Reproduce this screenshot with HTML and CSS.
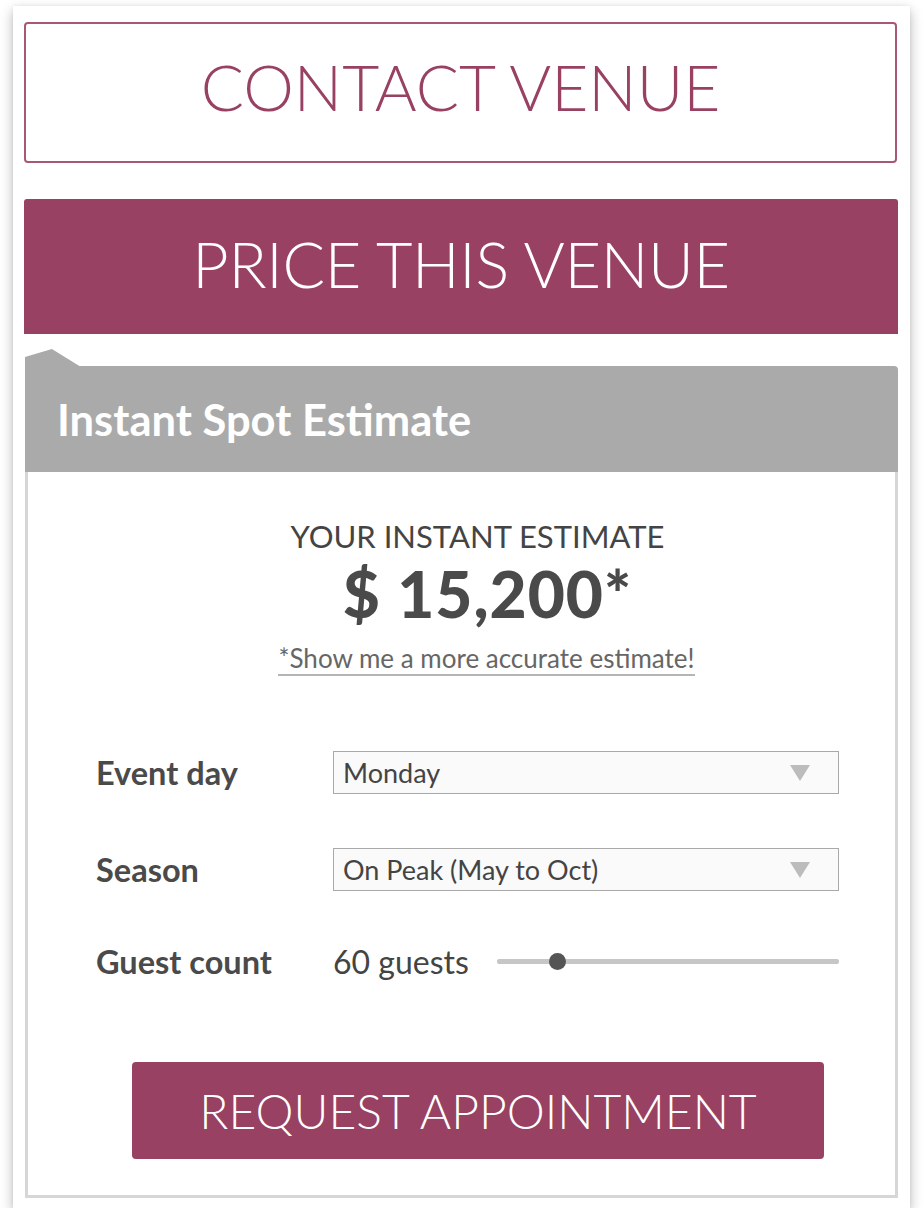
FILE: index.html
```html
<!DOCTYPE html>
<html>
<head>
<meta charset="utf-8">
<link rel="stylesheet" href="styles.css">
</head>
<body>
<div class="card">
  <div class="btn-outline">CONTACT VENUE</div>
  <div class="btn-price">PRICE THIS VENUE</div>
  <div class="panel">
    <div class="panel-head">Instant Spot Estimate</div>
    <div class="panel-body">
      <div class="estimate">
        <div class="est-title">YOUR INSTANT ESTIMATE</div>
        <div class="est-price">$ 15,200*</div>
        <div class="est-link-wrap"><span class="est-link">*Show me a more accurate estimate!</span></div>
      </div>
      <div class="form">
        <div class="row">
          <div class="label">Event day</div>
          <div class="select"><span>Monday</span><span class="caret"></span></div>
        </div>
        <div class="row">
          <div class="label">Season</div>
          <div class="select"><span>On Peak (May to Oct)</span><span class="caret"></span></div>
        </div>
        <div class="row row-guest">
          <div class="label">Guest count</div>
          <div class="guest">
            <span class="guest-val">60 guests</span>
            <div class="slider"><div class="track"></div><div class="thumb"></div></div>
          </div>
        </div>
      </div>
      <div class="btn-request">REQUEST APPOINTMENT</div>
    </div>
  </div>
</div>
</body>
</html>
```
FILE: styles.css
```css
* { box-sizing: border-box; }
html, body { margin: 0; padding: 0; background: #fff; }
body { font-family: Lato, "Open Sans", sans-serif; color: #4a4a4a; }

.card {
  margin: 6px 14px 0 13px;
  width: 897px;
  padding: 16px 12px 10px 11px;
  background: #fff;
  box-shadow: 0 5px 12px rgba(0,0,0,0.28), 0 0 4px rgba(0,0,0,0.06);
}

.btn-outline {
  width: 873px;
  height: 141px;
  border: 2px solid #a85877;
  border-radius: 4px;
  color: #984162;
  font-size: 64px;
  font-weight: 300;
  display: flex;
  align-items: center;
  justify-content: center;
  padding-bottom: 12px;
}

.btn-price {
  margin-top: 36px;
  width: 874px;
  height: 135px;
  background: #984162;
  border-radius: 3px 3px 0 0;
  color: #fff;
  font-size: 63px;
  font-weight: 300;
  letter-spacing: -0.3px;
  display: flex;
  align-items: center;
  justify-content: center;
  padding-bottom: 6px;
}

.panel {
  margin: 32px 0 0 1px;
  width: 873px;
  position: relative;
}
.panel::before {
  content: "";
  position: absolute;
  left: 0;
  top: -17px;
  width: 56px;
  height: 18px;
  background: #aaaaaa;
  clip-path: polygon(0 45%, 48% 0, 100% 100%, 0 100%);
}
.panel-head {
  height: 106px;
  background: #aaaaaa;
  border-radius: 0 4px 0 0;
  color: #fff;
  font-size: 43.5px;
  font-weight: 700;
  display: flex;
  align-items: center;
  padding-left: 32px;
}
.panel-body {
  border: 3px solid #d6d6d6;
  border-top: none;
  padding: 46px 56px 36px 68px;
}

.estimate { text-align: center; padding-left: 20px; }
.est-title { font-size: 31px; line-height: 36px; color: #444; }
.est-price { margin: 8px 0 0 20px; font-size: 64px; line-height: 63px; font-weight: 900; letter-spacing: 1px; color: #4a4a4a; }
.est-link-wrap { margin: 18px 0 0 18px; }
.est-link {
  display: inline-block;
  font-size: 26px;
  line-height: 30px;
  color: #666;
  padding-bottom: 1px;
  border-bottom: 2px solid #b5b5b5;
}

.form { margin-top: 75px; display: flex; flex-direction: column; gap: 54px; }
.row { display: flex; align-items: center; }
.row-guest { margin-top: -3px; }
.label { width: 237px; font-size: 32.5px; font-weight: 700; color: #4a4a4a; }
.select {
  width: 506px;
  height: 43px;
  border: 1.5px solid #a9a9a9;
  background: #fafafa;
  display: flex;
  align-items: center;
  justify-content: space-between;
  padding: 0 28px 0 9px;
  font-size: 27px;
  color: #444;
}
.caret {
  width: 0; height: 0;
  border-left: 10px solid transparent;
  border-right: 10px solid transparent;
  border-top: 16px solid #bcbcbc;
}
.guest { width: 506px; display: flex; align-items: center; }
.guest-val { font-size: 32px; color: #444; width: 164px; }
.slider { flex: 1; position: relative; height: 20px; display: flex; align-items: center; }
.track { width: 100%; height: 5px; background: #c6c6c6; border-radius: 2px; }
.thumb {
  position: absolute;
  left: 52px;
  top: 1px;
  width: 17px; height: 17px;
  border-radius: 50%;
  background: #555;
}

.btn-request {
  margin: 81px 0 0 36px;
  width: 692px;
  height: 97px;
  background: #984162;
  border-radius: 4px;
  color: #fff;
  font-size: 48px;
  font-weight: 300;
  display: flex;
  align-items: center;
  justify-content: center;
}
```
